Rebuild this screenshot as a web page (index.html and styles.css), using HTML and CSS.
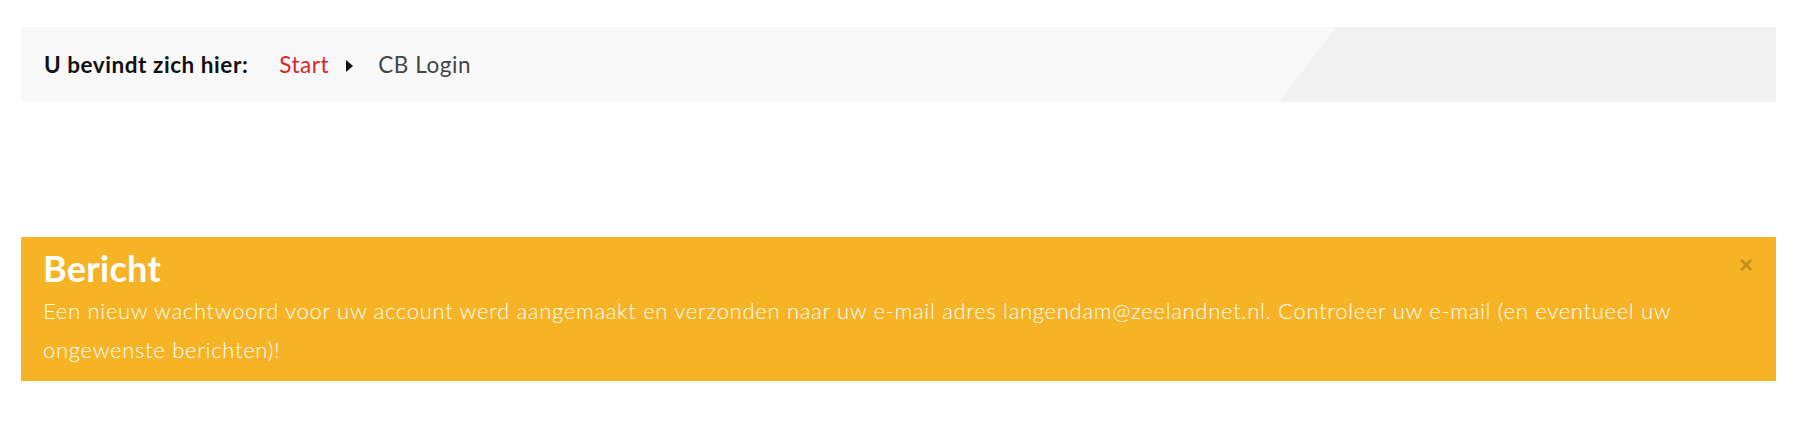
FILE: index.html
```html
<!DOCTYPE html>
<html lang="nl">
<head>
  <meta charset="UTF-8">
  <meta name="viewport" content="width=device-width, initial-scale=1.0">
  <title>CB Login</title>
  <link rel="stylesheet" href="styles.css">
</head>
<body>
  <div class="page">
    <div class="breadcrumbs">
      <span class="crumb-label">U bevindt zich hier:</span>
      <a class="crumb-link" href="#">Start</a>
      <span class="crumb-sep"></span>
      <span class="crumb-current">CB Login</span>
    </div>

    <div class="alert">
      <div class="alert-head">
        <h4 class="alert-title">Bericht</h4>
        <button type="button" class="alert-close">&times;</button>
      </div>
      <p class="alert-text">Een nieuw wachtwoord voor uw account werd aangemaakt en verzonden naar uw e-mail adres langendam@zeelandnet.nl. Controleer uw e-mail (en eventueel uw ongewenste berichten)!</p>
    </div>
  </div>
</body>
</html>
```

FILE: styles.css
```css
body {
  margin: 0;
  font-family: Lato, "Open Sans", sans-serif;
  background-color: #fff;
}
.page {
  width: 1755px;
  margin-left: 21px;
  padding-top: 27px;
}
.breadcrumbs {
  position: relative;
  display: flex;
  align-items: center;
  height: 75px;
  padding-left: 23px;
  background-color: #f8f8f8;
  font-size: 22.5px;
  letter-spacing: 0.55px;
  overflow: hidden;
}
.breadcrumbs::before {
  content: "";
  position: absolute;
  top: 0;
  right: 0;
  width: 497px;
  height: 100%;
  background-color: #f1f1f1;
  clip-path: polygon(57px 0, 100% 0, 100% 100%, 0 100%);
}
.crumb-label {
  position: relative;
  font-weight: bold;
  color: #111;
  margin-right: 31px;
}
.crumb-link {
  position: relative;
  color: #d7262b;
  text-decoration: none;
}
.crumb-sep {
  position: relative;
  width: 0;
  height: 0;
  margin: 2px 25px 0 17px;
  border-top: 6px solid transparent;
  border-bottom: 6px solid transparent;
  border-left: 7px solid #111;
}
.crumb-current {
  position: relative;
  color: #444;
}
.alert {
  margin-top: 135px;
  padding: 12px 23px 12px 22px;
  background-color: #f5b325;
  color: #fff;
}
.alert-head {
  display: flex;
  justify-content: space-between;
  align-items: flex-start;
}
.alert-title {
  margin: 0;
  font-size: 36px;
  font-weight: bold;
  line-height: 1.1;
  letter-spacing: 0.3px;
}
.alert-close {
  margin-top: 4px;
  padding: 0;
  border: none;
  background: none;
  font-family: "Liberation Sans", sans-serif;
  font-size: 24px;
  font-weight: bold;
  line-height: 1;
  color: #000;
  opacity: 0.2;
  cursor: pointer;
}
.alert-text {
  margin: 2px 0 0;
  font-size: 22px;
  font-weight: 300;
  line-height: 39px;
  letter-spacing: 0.7px;
}
```
